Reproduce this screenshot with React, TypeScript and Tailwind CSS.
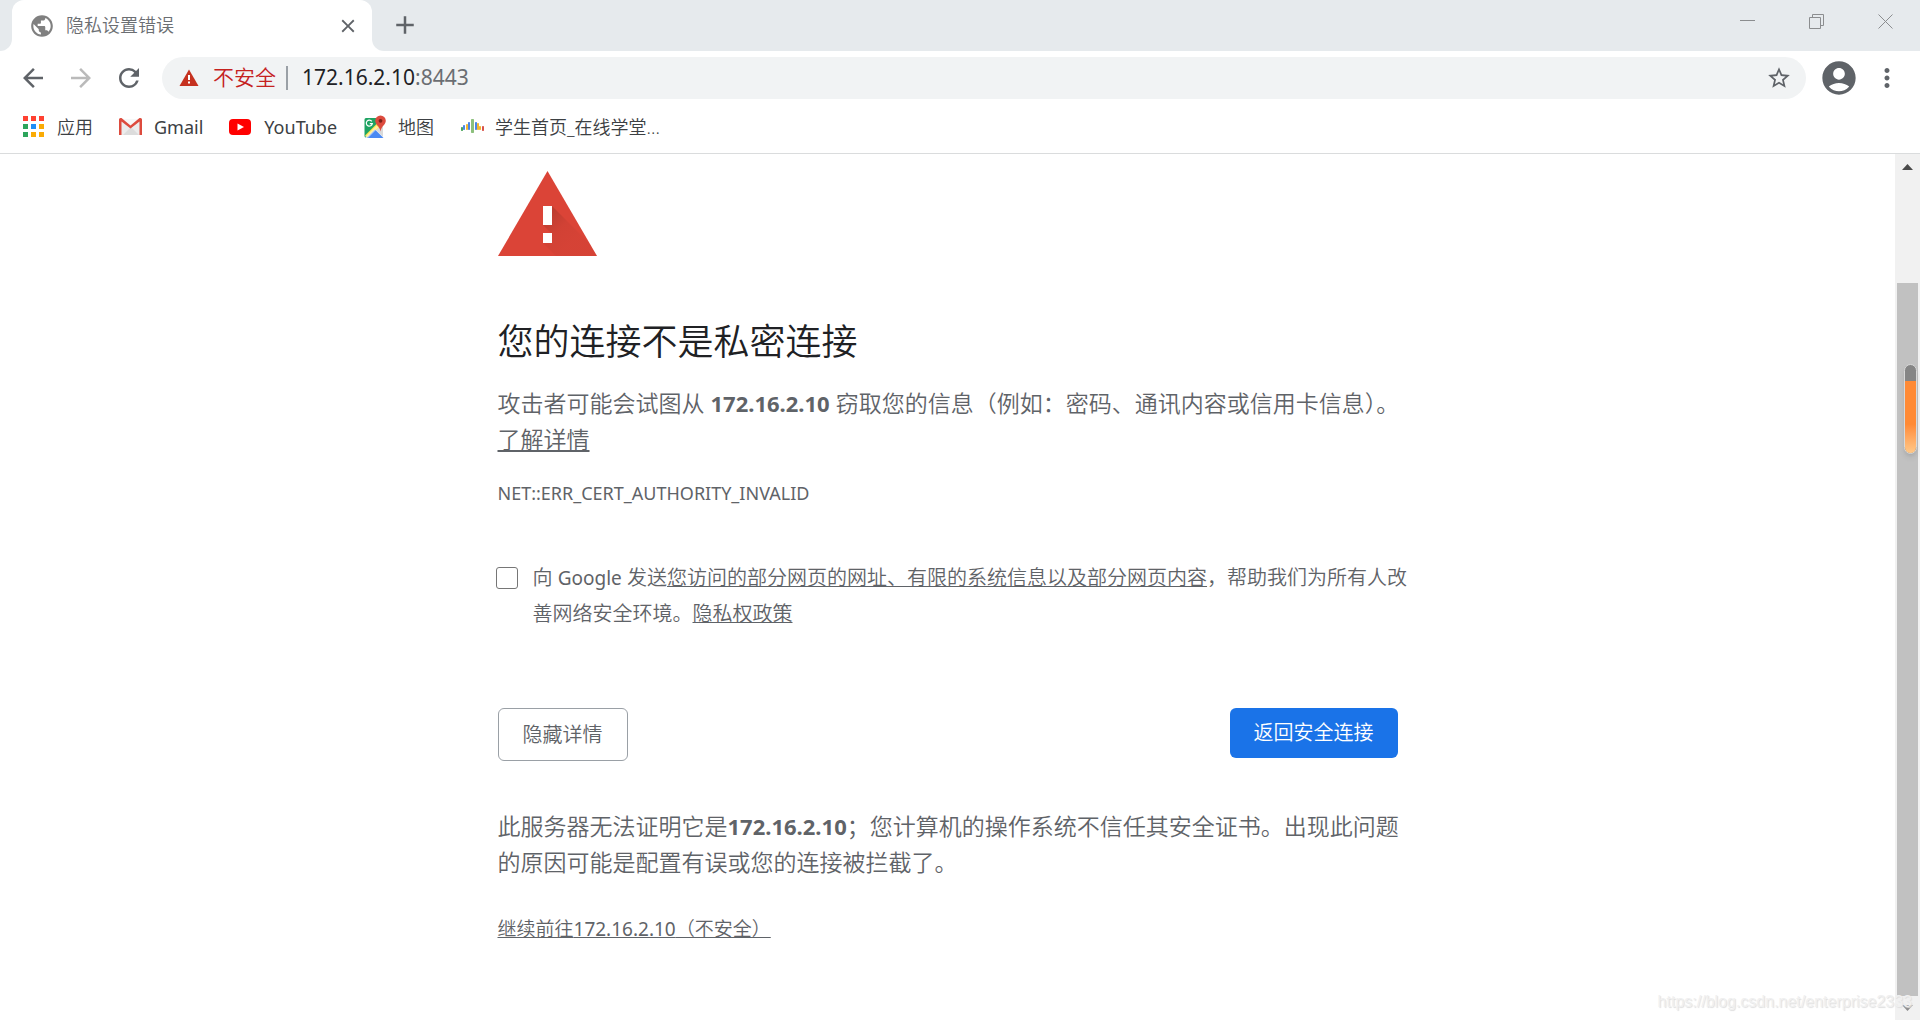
import type { ReactNode } from 'react';
import {
  MdAccountCircle,
  MdAdd,
  MdArrowBack,
  MdArrowForward,
  MdClose,
  MdMoreVert,
  MdPublic,
  MdRefresh,
  MdStarBorder,
} from 'react-icons/md';

const HOST = '172.16.2.10';

const APP_DOTS = [
  '#ff4131', '#ff4131', '#ff4131',
  '#2da55c', '#1e8ef7', '#faab05',
  '#2da55c', '#faab05', '#faab05',
];

function AppsIcon() {
  return (
    <svg width="24" height="24" viewBox="0 0 24 24">
      {APP_DOTS.map((fill, i) => (
        <rect key={i} x={1 + (i % 3) * 8} y={Math.floor(i / 3) * 8 + 1} width="5" height="5" fill={fill} />
      ))}
    </svg>
  );
}

function GmailIcon() {
  return (
    <svg width="24" height="24" viewBox="0 0 24 24">
      <path d="M2 4h20v16H2z" fill="#ececec" />
      <path d="M4 20l8-8 8 8z" fill="#dcdcdc" />
      <path d="M2 4h20l-10 8z" fill="#f7f7f7" />
      <path d="M0 4.500A1.500 1.500 0 0 1 1.500 3h1L11.500 10.500 20.500 3h1A1.500 1.500 0 0 1 23 4.500V20h-2.500V6.500L11.500 13.500 2.500 6.500V20H0z" fill="#dd4b3e" />
    </svg>
  );
}

function YoutubeIcon() {
  return (
    <svg width="24" height="24" viewBox="0 0 24 24">
      <rect x="0" y="4" width="22" height="16" rx="4" fill="#ff0000" />
      <path d="M8.500 8.500l6.500 3.500-6.500 3.500z" fill="#fff" />
    </svg>
  );
}

function MapsIcon() {
  return (
    <svg width="24" height="24" viewBox="0 0 24 24">
      <path d="M3 3h12v9L3 22.500a1.500 1.500 0 0 1-1.500-1.500V4.500A1.500 1.500 0 0 1 3 3z" fill="#1ea362" />
      <path d="M12 12l8-3v13l-8-8z" fill="#dadada" />
      <path d="M2 20.500L16 6.500l3 3L5 23z" fill="#ffe047" />
      <path d="M3.500 23L12 14.500 20.500 23z" fill="#4a89f3" />
      <path d="M2 22L13.500 10.500l2 2L5 23z" fill="#fff" opacity="0.5" />
      <path d="M8.800 6.400A3 3 0 1 0 9.300 8.600H6.800" fill="none" stroke="#fff" strokeWidth="1.200" />
      <path d="M17.500.5a5.300 5.300 0 0 0-5.300 5.300c0 4 4.300 5 5.300 10.700 1-5.700 5.300-6.700 5.300-10.700A5.300 5.300 0 0 0 17.500.500z" fill="#dc4b3e" />
      <circle cx="17.500" cy="5.800" r="1.900" fill="#7a2018" />
    </svg>
  );
}

const WAVE_BARS = [
  { x: 1, y: 12, h: 4, fill: '#4ba65a' },
  { x: 3, y: 10, h: 5, fill: '#4a86e8' },
  { x: 6, y: 9, h: 6, fill: '#f2b632' },
  { x: 8, y: 7, h: 8, fill: '#4a86e8' },
  { x: 11, y: 4, h: 14, fill: '#8cc07c' },
  { x: 15, y: 7, h: 8, fill: '#4a86e8' },
  { x: 17, y: 8, h: 7, fill: '#f2b632' },
  { x: 19, y: 11, h: 4, fill: '#f2b632' },
  { x: 22, y: 11, h: 5, fill: '#d9534a' },
];

function WaveIcon() {
  return (
    <svg width="24" height="24" viewBox="0 0 24 24">
      {WAVE_BARS.map((b) => (
        <rect key={b.x} x={b.x} y={b.y} width={b.h > 10 ? 3 : 2} height={b.h} rx="0.7" fill={b.fill} />
      ))}
    </svg>
  );
}

const BOOKMARKS = [
  { label: '应用', icon: <AppsIcon /> },
  { label: 'Gmail', icon: <GmailIcon />, latin: true },
  { label: 'YouTube', icon: <YoutubeIcon />, latin: true },
  { label: '地图', icon: <MapsIcon /> },
  { label: '学生首页_在线学堂...', icon: <WaveIcon /> },
];

function IconButton({ label, children }: { label: string; children: ReactNode }) {
  return (
    <button aria-label={label} className="flex h-10 w-12 items-center justify-center">
      {children}
    </button>
  );
}

function WindowButton({ label, d }: { label: string; d: string }) {
  return (
    <button aria-label={label} className="flex h-[42px] w-[69px] items-center justify-center">
      <svg width="15" height="15" viewBox="0 0 15 15" fill="none" stroke="#8b8d8f">
        <path d={d} />
      </svg>
    </button>
  );
}

function TabStrip() {
  return (
    <div className="flex h-[51px]">
      <div className="w-3 rounded-br-xl bg-[#e6eaed]" />
      <div className="w-[360px] bg-[#e6eaed]">
        <div className="flex h-full items-center rounded-t-xl bg-white pr-[13px] pl-[17px]">
          <MdPublic size={26} className="text-[#808080]" />
          <span className="ml-[11px] flex-1 text-[18px] text-[#6b6e72]">隐私设置错误</span>
          <button aria-label="关闭标签页" className="text-[#5f6368]">
            <MdClose size={22} />
          </button>
        </div>
      </div>
      <div className="flex flex-1 items-start rounded-bl-xl bg-[#e6eaed]">
        <button aria-label="新标签页" className="ml-[18px] flex h-[50px] items-center text-[#5f6368]">
          <MdAdd size={30} />
        </button>
        <div className="ml-auto flex">
          <WindowButton label="最小化" d="M0 6.500h15" />
          <WindowButton label="还原" d="M.5 3.500h11v11h-11zM3.500 3.500v-3h11v11h-3" />
          <WindowButton label="关闭" d="M.5.5l14 14M14.500.5l-14 14" />
        </div>
      </div>
    </div>
  );
}

function Toolbar() {
  return (
    <div className="flex h-[54px] items-center px-[9px] text-[#5f6368]">
      <IconButton label="后退"><MdArrowBack size={30} /></IconButton>
      <IconButton label="前进"><MdArrowForward size={30} className="text-[#bababa]" /></IconButton>
      <IconButton label="重新加载"><MdRefresh size={30} /></IconButton>
      <div className="mx-[9px] flex h-[42px] flex-1 items-center rounded-full bg-[#f1f3f4] pr-[14px] pl-[17px]">
        <svg width="20" height="20" viewBox="0 0 20 20">
          <path d="M10 1.500L19.500 18H.5z" fill="#c5311f" />
          <path d="M9 7h2v5H9zM9 13.500h2v2H9z" fill="#fff" />
        </svg>
        <span className="ml-[14px] text-[21px] text-[#c5221f]">不安全</span>
        <span className="mx-[10px] h-6 w-[2px] bg-[#9aa0a6]" />
        <input
          aria-label="地址"
          defaultValue={HOST}
          className="ml-1 w-[113px] bg-transparent text-[21px] font-normal text-[#202124] outline-none"
        />
        <span className="flex-1 text-[21px] font-normal text-[#6b6e72]">:8443</span>
        <button aria-label="为此标签页添加书签">
          <MdStarBorder size={26} />
        </button>
      </div>
      <IconButton label="用户"><MdAccountCircle size={40} /></IconButton>
      <IconButton label="更多"><MdMoreVert size={30} /></IconButton>
    </div>
  );
}

function BookmarkBar() {
  return (
    <nav className="flex h-[49px] items-center gap-[26px] border-b border-[#dadcdd] pb-1 pl-[22px] text-[18px] text-[#3c4043]">
      {BOOKMARKS.map((b) => (
        <a key={b.label} href="#" className="flex items-center gap-[11px]">
          {b.icon}
          <span className={b.latin ? 'font-normal' : undefined}>{b.label}</span>
        </a>
      ))}
    </nav>
  );
}

function WarningTriangle() {
  return (
    <svg width="99" height="85" viewBox="0 0 99 85">
      <defs>
        <linearGradient id="shade" x1="50" y1="45" x2="75" y2="70" gradientUnits="userSpaceOnUse">
          <stop offset="0" stopColor="#b0392d" stopOpacity="0.7" />
          <stop offset="0.5" stopColor="#b53a2e" stopOpacity="0.25" />
          <stop offset="1" stopColor="#b53a2e" stopOpacity="0.15" />
        </linearGradient>
      </defs>
      <path d="M49.500 0L99 85H0z" fill="#db4437" />
      <path d="M54 35l36 36 9 14H58L45 72l9-9-9-9z" fill="url(#shade)" />
      <path d="M45 35h9v19h-9zM45 62h9v10h-9z" fill="#fff" />
    </svg>
  );
}

function Interstitial() {
  return (
    <main className="mx-auto w-[900px] pt-[17px] text-[#5f6368]">
      <WarningTriangle />
      <h1 className="mt-[62px] text-[36px] leading-[48px] text-[#202124]">您的连接不是私密连接</h1>
      <p className="mt-[19px] text-[23px] leading-[36px] whitespace-nowrap">
        攻击者可能会试图从 <strong className="text-[22px] font-bold">{HOST}</strong> 窃取您的信息（例如：密码、通讯内容或信用卡信息）。
        <br />
        <a href="#" className="underline decoration-2 underline-offset-2">了解详情</a>
      </p>
      <p className="mt-[18px] text-[18px] leading-[36px] font-normal">NET::ERR_CERT_AUTHORITY_INVALID</p>

      <div className="mt-[49px] flex items-start gap-[15px]">
        <input
          id="report"
          type="checkbox"
          className="mt-[7px] -ml-[2px] size-[22px] shrink-0 appearance-none rounded-[3px] border border-[#767676] bg-white checked:bg-[#1a73e8]"
        />
        <label htmlFor="report" className="text-[20px] leading-[36px] whitespace-nowrap">
          向 <span className="text-[19px] font-normal">Google</span> 发送
          <a href="#" className="underline decoration-1">您访问的部分网页的网址、有限的系统信息以及部分网页内容</a>
          ，帮助我们为所有人改
          <br />
          善网络安全环境。<a href="#" className="underline decoration-1">隐私权政策</a>
        </label>
      </div>

      <div className="mt-[76px] flex items-start justify-between text-[20px]">
        <button className="h-[53px] rounded-md border border-[#9aa0a6] px-6">隐藏详情</button>
        <button className="h-[50px] rounded-md bg-[#1a73e8] px-6 text-white">返回安全连接</button>
      </div>

      <p className="mt-[47px] text-[23px] leading-[36px] whitespace-nowrap">
        此服务器无法证明它是<strong className="text-[22px] font-bold">{HOST}</strong>；您计算机的操作系统不信任其安全证书。出现此问题
        <br />
        的原因可能是配置有误或您的连接被拦截了。
      </p>
      <p className="mt-[31px] text-[19px] leading-[36px]">
        <a href="#" className="underline decoration-1">
          继续前往<span className="font-normal">{HOST}</span>（不安全）
        </a>
      </p>
    </main>
  );
}

function Scrollbar() {
  return (
    <div className="relative flex w-[25px] flex-col items-center bg-[#f1f1f1]">
      <svg width="11" height="26" viewBox="0 0 11 26" fill="#4a4a4a">
        <path d="M0 16l5.500-6 5.500 6z" />
      </svg>
      <div className="mt-[103px] w-[21px] flex-1 bg-[#c1c1c1]" />
      <svg width="11" height="24" viewBox="0 0 11 24" fill="#8c8c8c">
        <path d="M0 9h11l-5.500 6z" />
      </svg>
      {/* floating level gauge over the thumb */}
      <div className="absolute top-[210px] right-[3px] h-[90px] w-[13px] overflow-hidden rounded-full border border-[#d8d8d8] bg-[#858585] shadow-md">
        <div className="mt-4 h-[72px] bg-gradient-to-b from-[#ff8a35] from-60% to-[#ffc888]" />
      </div>
    </div>
  );
}

export default function App() {
  return (
    <div className="relative flex min-h-screen flex-col bg-white font-['Noto_Sans','Noto_Sans_CJK_SC',sans-serif] font-[350]">
      <header>
        <TabStrip />
        <Toolbar />
        <BookmarkBar />
      </header>
      <div className="flex flex-1">
        <div className="flex-1">
          <Interstitial />
        </div>
        <Scrollbar />
      </div>
      <span className="absolute right-2 bottom-[6px] font-['Liberation_Sans',sans-serif] text-[16px] text-[#f0f0f0] [text-shadow:1px_1px_1px_#dedede]">
        https://blog.csdn.net/enterprise2333
      </span>
    </div>
  );
}
